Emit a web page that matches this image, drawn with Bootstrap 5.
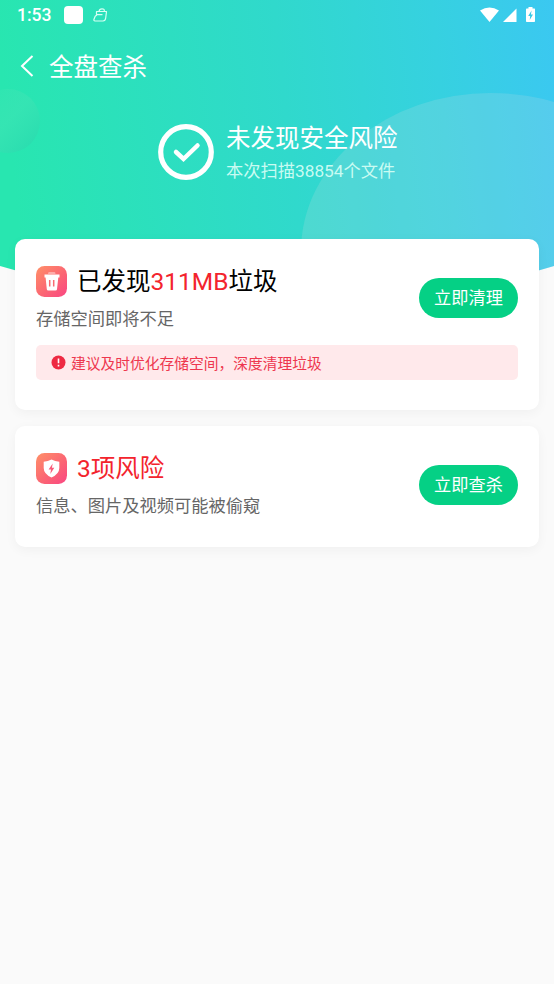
<!DOCTYPE html>
<html lang="zh-CN">
<head>
<meta charset="utf-8">
<meta name="viewport" content="width=device-width, initial-scale=1">
<title>全盘查杀</title>
<link href="https://cdn.jsdelivr.net/npm/bootstrap@5.3.0/dist/css/bootstrap.min.css" rel="stylesheet">
<style>
body{background:#fafafa;font-family:Roboto,"Noto Sans CJK SC",sans-serif;font-size:17.25px;line-height:24px;min-height:984px}
svg{display:block;flex:none}
.hero-area{height:239px}
.hero-bg{position:absolute;left:0;top:0;z-index:-1}
.status-bar{height:30px;padding:0 17px;font-size:17.5px;font-weight:500}
.app-icon{width:19px;height:18px;border-radius:4px;background:#fff;margin-left:13px;margin-right:10px}
.title-bar{height:72px;padding-left:20px;gap:14px}
.title-bar .big-text{padding-top:4px}
.big-text{font-size:24.5px;line-height:36px;font-weight:400}
.result-row{margin-top:17px;padding-left:158px;gap:12px}
.result-row svg{margin-top:4.5px}
.result-text{padding-top:2px}
.result-note{color:#c9fbf2;line-height:28px}
.panel{border:0;border-radius:10px;box-shadow:0 3px 12px rgba(0,0,0,.045);padding:0 21px;margin:0 15px 16px}
.panel-a{height:171px;padding-top:24px}
.panel-b{height:121px;padding-top:24px}
.panel .big-text{padding-top:1px;line-height:35px}
.desc{color:#666;margin-top:8px}
.red{color:#f3242d}
.pill{width:99px;height:40px;background:#05d085;color:#fff;font-size:17.2px;padding:2px 0 0;border:0;margin-top:2px}
.tip{height:35px;background:#ffe9eb;color:#ee374e;border-radius:5px;font-size:14.75px;padding-left:15px;margin-top:14px;gap:5px}
.tip span{padding-top:2px}
</style>
<script src="https://cdn.jsdelivr.net/npm/bootstrap@5.3.0/dist/js/bootstrap.bundle.min.js"></script>
</head>
<body>
<header class="hero-area position-relative text-white">
  <svg class="hero-bg" width="554" height="300" viewBox="0 0 554 300">
    <defs>
      <linearGradient id="sky" gradientUnits="userSpaceOnUse" x1="0" y1="60" x2="554" y2="0"><stop offset="0" stop-color="#28e6b0"/><stop offset=".5" stop-color="#30d9cc"/><stop offset=".78" stop-color="#36d1e0"/><stop offset="1" stop-color="#3bc8f1"/></linearGradient>
      <linearGradient id="orb" x1="0" y1="0" x2="1" y2="1"><stop offset="0" stop-color="#42e6b4" stop-opacity=".1"/><stop offset=".5" stop-color="#3ae4b4" stop-opacity=".7"/><stop offset="1" stop-color="#26daae"/></linearGradient>
      <clipPath id="dome"><path d="M0 0H554V266Q277 350 0 266Z"/></clipPath>
    </defs>
    <g clip-path="url(#dome)">
      <rect width="554" height="300" fill="url(#sky)"/>
      <circle cx="8" cy="121" r="32" fill="url(#orb)"/>
      <ellipse cx="491" cy="251" rx="190" ry="158" fill="#d2dce6" fill-opacity=".18"/>
    </g>
  </svg>
  <div class="status-bar d-flex align-items-center">
    <span>1:53</span><span class="app-icon"></span>
    <svg width="15" height="16" viewBox="0 0 15 16" fill="none" stroke="#d8fff4" stroke-width="1.2" stroke-linejoin="round"><path d="M3.500 4.500H13.500L12.700 11Q12.300 14 10 14H2Q.500 14 1 12.200L2.200 9.200L3.500 8.300Z"/><path d="M6 4.500Q6.300 1.800 9 1.800T11.300 4.500M3.500 7.700H9.500"/></svg>
    <div class="d-flex align-items-center ms-auto">
      <svg width="58" height="18" viewBox="0 0 58 18" fill="#fff"><path d="M1 4.500Q10.500-1.500 20 4.500L10.500 16Z"/><path d="M24 16H37.500V2.500Z"/><path d="M49.500 1H53.500V2.600H55.500Q56 2.600 56 3.400V15.200Q56 16 55.200 16H47.800Q47 16 47 15.200V3.400Q47 2.600 47.800 2.600H49.500Z"/><path d="M52.600 4.500L49.200 10H51.200L50.700 14L54 8.500H51.900Z" fill="#37c9e6"/></svg>
    </div>
  </div>
  <div class="title-bar d-flex align-items-center">
    <svg width="15" height="24" viewBox="0 0 15 24" fill="none" stroke="#fff" stroke-width="2"><path d="M12.500 2L2 12L12.500 22"/></svg>
    <h1 class="big-text mb-0">全盘查杀</h1>
  </div>
  <div class="result-row d-flex align-items-start">
    <svg width="56" height="56" viewBox="0 0 56 56" fill="none" stroke="#fff"><circle cx="28" cy="28" r="25.300" stroke-width="5.200"/><path d="M18 28L25.500 35L39.500 21.500" stroke-width="4.500" stroke-linecap="round"/></svg>
    <div class="result-text"><h2 class="big-text mb-0">未发现安全风险</h2><div class="result-note">本次扫描38854个文件</div></div>
  </div>
</header>
<main>
  <section class="card panel panel-a">
    <div class="d-flex align-items-center justify-content-between">
      <div>
        <div class="d-flex align-items-center">
          <svg class="me-2" width="33" height="32" viewBox="0 0 33 32"><defs><linearGradient id="coral" x1="0" y1="0" x2="1" y2="1"><stop offset="0" stop-color="#ff9068"/><stop offset=".55" stop-color="#fb6673"/><stop offset="1" stop-color="#fa4683"/></linearGradient></defs><rect y="1" width="31" height="31" rx="8.500" fill="url(#coral)"/><path d="M12 8.500Q12 7.500 13 7.500H18.500Q19.500 7.500 19.500 8.500Z" fill="#fff" fill-opacity=".8"/><path d="M8.500 9.500H23.500V12.500H22.300L21 24.200Q20.900 25.500 19.500 25.500H12.300Q10.900 25.500 10.800 24.200L9.600 12.500H8.500Z" fill="#fff"/><path d="M13.700 15V21.500M17.700 15V21.500" stroke="#f96b72" stroke-width="1.500"/></svg>
          <h2 class="big-text mb-0 text-black">已发现<span class="red">311MB</span>垃圾</h2>
        </div>
        <div class="desc">存储空间即将不足</div>
      </div>
      <button class="btn pill rounded-pill">立即清理</button>
    </div>
    <div class="tip d-flex align-items-center">
      <svg width="15" height="15" viewBox="0 0 15 15"><circle cx="7.500" cy="7.500" r="7" fill="#ee2942"/><path d="M7.500 3.500V8.300M7.500 9.800V11.500" stroke="#fff" stroke-width="1.600"/></svg>
      <span>建议及时优化存储空间，深度清理垃圾</span>
    </div>
  </section>
  <section class="card panel panel-b">
    <div class="d-flex align-items-center justify-content-between">
      <div>
        <div class="d-flex align-items-center">
          <svg class="me-2" width="33" height="32" viewBox="0 0 33 32"><rect y="1" width="31" height="31" rx="8.500" fill="url(#coral)"/><path d="M15.500 7.500Q19 9.500 23.300 9.700V16Q23.300 22 15.500 25.500Q7.700 22 7.700 16V9.700Q12 9.500 15.500 7.500Z" fill="#fff"/><path d="M16.700 11.500L12.600 17.500H15L14.300 22L18.300 15.800H15.900Z" fill="#fa5b79"/></svg>
          <h2 class="big-text mb-0 red">3项风险</h2>
        </div>
        <div class="desc">信息、图片及视频可能被偷窥</div>
      </div>
      <button class="btn pill rounded-pill">立即查杀</button>
    </div>
  </section>
</main>
</body>
</html>
